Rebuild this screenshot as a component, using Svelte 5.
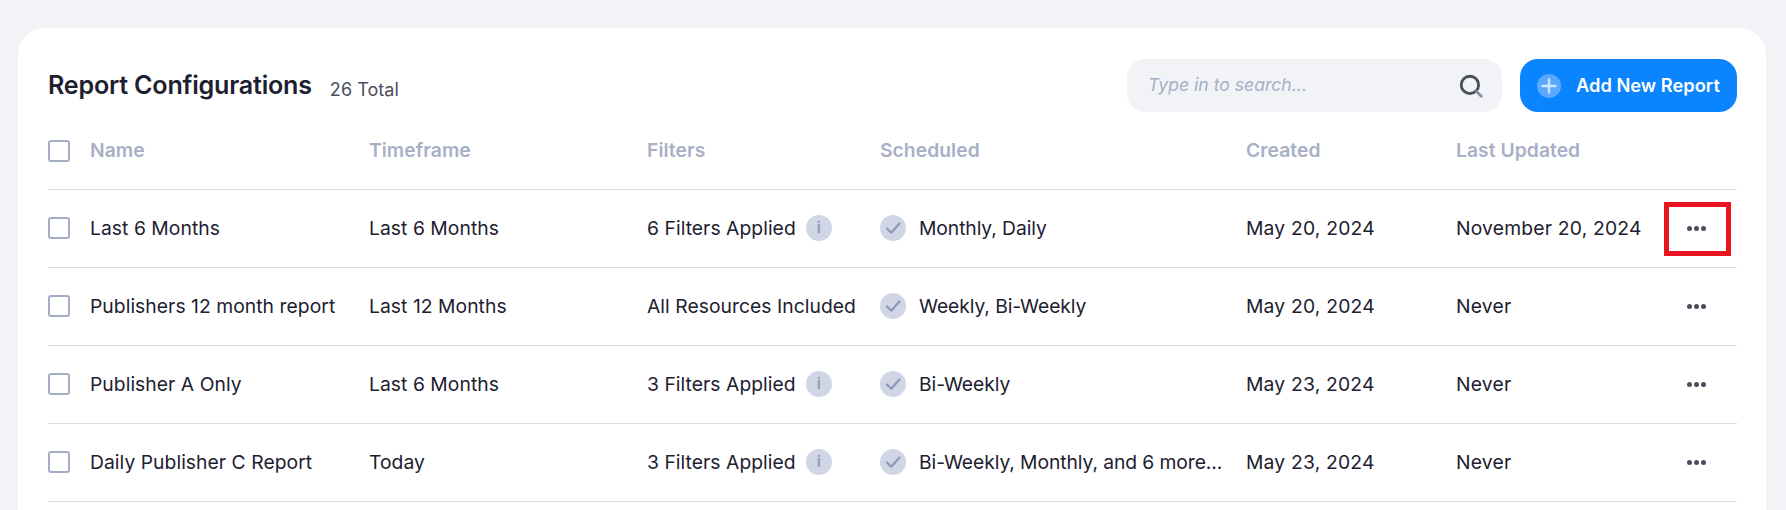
<script lang="ts">
	const columns = ['Name', 'Timeframe', 'Filters', 'Scheduled', 'Created', 'Last Updated'];

	const reports = [
		{ name: 'Last 6 Months', timeframe: 'Last 6 Months', filters: '6 Filters Applied', info: true, scheduled: 'Monthly, Daily', created: 'May 20, 2024', updated: 'November 20, 2024', flagged: true },
		{ name: 'Publishers 12 month report', timeframe: 'Last 12 Months', filters: 'All Resources Included', info: false, scheduled: 'Weekly, Bi-Weekly', created: 'May 20, 2024', updated: 'Never', flagged: false },
		{ name: 'Publisher A Only', timeframe: 'Last 6 Months', filters: '3 Filters Applied', info: true, scheduled: 'Bi-Weekly', created: 'May 23, 2024', updated: 'Never', flagged: false },
		{ name: 'Daily Publisher C Report', timeframe: 'Today', filters: '3 Filters Applied', info: true, scheduled: 'Bi-Weekly, Monthly, and 6 more...', created: 'May 23, 2024', updated: 'Never', flagged: false }
	];
</script>

<main class="card">
	<header class="top">
		<div class="heading">
			<h1>Report Configurations</h1>
			<span class="total">26 Total</span>
		</div>
		<div class="search">
			<span class="placeholder">Type in to search...</span>
			<svg viewBox="0 0 24 24" width="26" height="26" fill="none" aria-hidden="true">
				<circle cx="11" cy="11" r="8" stroke="#4a4e5c" stroke-width="2.6" />
				<path d="M17 17l4.5 4.5" stroke="#8b90a0" stroke-width="2.6" stroke-linecap="round" />
			</svg>
		</div>
		<button class="add">
			<span class="plus">
				<svg viewBox="0 0 24 24" width="24" height="24" aria-hidden="true">
					<path d="M12 5.5v13M5.5 12h13" stroke="#cfe4ff" stroke-width="2.4" stroke-linecap="round" />
				</svg>
			</span>
			<span class="add-label">Add New Report</span>
		</button>
	</header>

	<div class="row head">
		<span class="box"></span>
		{#each columns as column}
			<span>{column}</span>
		{/each}
	</div>

	{#each reports as report}
		<div class="row">
			<span class="box"></span>
			<span>{report.name}</span>
			<span>{report.timeframe}</span>
			<span class="with-badge">
				{report.filters}
				{#if report.info}
					<span class="info">i</span>
				{/if}
			</span>
			<span class="with-badge sched">
				<span class="tick">
					<svg viewBox="0 0 26 26" width="26" height="26" aria-hidden="true">
						<path d="M7 13.5l4.2 4.2L19.5 8.5" fill="none" stroke="#8e97b4" stroke-width="2.2" stroke-linecap="round" stroke-linejoin="round" />
					</svg>
				</span>
				{report.scheduled}
			</span>
			<span class="date">{report.created}</span>
			<span class="date">{report.updated}</span>
			<span class="menu" class:flagged={report.flagged}>
				<i></i><i></i><i></i>
			</span>
		</div>
	{/each}
</main>

<style>
	:global(html),
	:global(body) {
		height: 100%;
		overflow: hidden;
		background: #f1f3f7;
	}

	.card {
		box-sizing: border-box;
		margin: 28px 20px 0 18px;
		min-height: 520px;
		padding: 31px 29px 0 30px;
		background: #fff;
		border-radius: 26px;
		font-family: 'Inter', 'Liberation Sans', sans-serif;
		font-size: 19.3px;
		letter-spacing: 0.05px;
		color: #1d2030;
	}

	.top {
		display: flex;
		align-items: center;
		height: 53px;
	}

	.heading {
		flex: 1;
		display: flex;
		align-items: baseline;
		gap: 18px;
		padding-bottom: 1px;
	}

	h1 {
		margin: 0;
		font-size: 25.1px;
		font-weight: 600;
		letter-spacing: -0.2px;
		color: #1d2030;
	}

	.total {
		font-size: 18px;
		color: #4b4f60;
		position: relative;
		top: 2px;
	}

	.search {
		box-sizing: border-box;
		width: 375px;
		height: 53px;
		display: flex;
		align-items: center;
		justify-content: space-between;
		padding: 0 18px 0 21px;
		background: #f1f3f7;
		border-radius: 18px;
	}

	.placeholder {
		font-style: italic;
		font-size: 17.6px;
		letter-spacing: 0;
		color: #a8afc6;
		margin-bottom: 2px;
	}

	.add {
		box-sizing: border-box;
		width: 217px;
		height: 53px;
		margin-left: 18px;
		display: flex;
		align-items: center;
		gap: 15px;
		padding: 0 0 0 17px;
		border: 0;
		border-radius: 18px;
		background: #0a84ff;
		color: #fff;
		font: 600 18.3px 'Inter', 'Liberation Sans', sans-serif;
		white-space: nowrap;
	}

	.add-label {
		margin-bottom: 2px;
	}

	.plus {
		width: 24px;
		height: 24px;
		border-radius: 50%;
		background: #5aa9ff;
		display: flex;
	}

	.row {
		display: grid;
		grid-template-columns: 42px 279px 278px 233px 366px 210px 208px 1fr;
		align-items: center;
		height: 78px;
		box-sizing: border-box;
		border-bottom: 1.5px solid #dcdee3;
		white-space: nowrap;
	}

	.row > span {
		margin-bottom: 2px;
	}

	.row.head {
		color: #a8afc6;
		font-weight: 600;
	}

	.row.head > .box {
		margin-bottom: 0;
	}

	.box {
		box-sizing: border-box;
		width: 22px;
		height: 22px;
		border: 2px solid #a5adc5;
		border-radius: 3px;
	}

	.date {
		letter-spacing: 0.2px;
	}

	.with-badge {
		display: flex;
		align-items: center;
		gap: 10px;
	}

	.info,
	.tick {
		width: 26px;
		height: 26px;
		border-radius: 50%;
		background: #d1d6e6;
		display: flex;
		align-items: center;
		justify-content: center;
		flex: none;
	}

	.info {
		color: #959db9;
		font-size: 15px;
		font-weight: 700;
	}

	.sched {
		gap: 13px;
		letter-spacing: -0.08px;
	}

	.row > .menu {
		box-sizing: border-box;
		width: 67px;
		height: 54px;
		margin-bottom: 0;
		padding-right: 3px;
		display: flex;
		align-items: center;
		justify-content: center;
		gap: 2px;
	}

	.row > .menu.flagged {
		border: 5px solid #e8141f;
	}

	.menu i {
		width: 5px;
		height: 5px;
		border-radius: 50%;
		background: #4a4e5c;
	}
</style>
